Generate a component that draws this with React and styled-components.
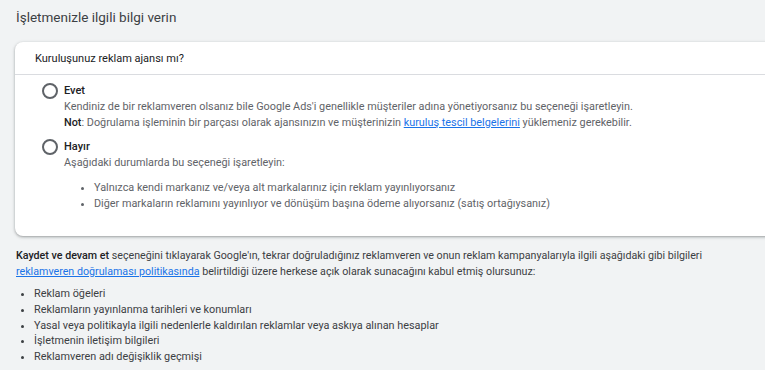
import styled, { createGlobalStyle } from "styled-components";

const GlobalStyle = createGlobalStyle`
  html, body {
    margin: 0;
    padding: 0;
    background: #f1f3f4;
    overflow: hidden;
  }
  body {
    font-family: Roboto, "Liberation Sans", Arial, sans-serif;
    -webkit-font-smoothing: antialiased;
  }
`;

const disclosed = [
  "Reklam öğeleri",
  "Reklamların yayınlanma tarihleri ve konumları",
  "Yasal veya politikayla ilgili nedenlerle kaldırılan reklamlar veya askıya alınan hesaplar",
  "İşletmenin iletişim bilgileri",
  "Reklamveren adı değişiklik geçmişi",
];

function App() {
  return (
    <Page>
      <GlobalStyle />
      <Title>İşletmenizle ilgili bilgi verin</Title>

      <Card>
        <CardHeader>Kuruluşunuz reklam ajansı mı?</CardHeader>
        <CardBody>
          <Option>
            <Radio aria-label="Evet" />
            <OptionText>
              <OptionLabel>Evet</OptionLabel>
              <Desc>
                Kendiniz de bir reklamveren olsanız bile Google Ads'i genellikle
                müşteriler adına yönetiyorsanız bu seçeneği işaretleyin.
              </Desc>
              <Desc>
                <strong>Not</strong>: Doğrulama işleminin bir parçası olarak
                ajansınızın ve müşterinizin{" "}
                <Link href="#">kuruluş tescil belgelerini</Link> yüklemeniz
                gerekebilir.
              </Desc>
            </OptionText>
          </Option>

          <Option>
            <Radio aria-label="Hayır" />
            <OptionText>
              <OptionLabel>Hayır</OptionLabel>
              <Desc>Aşağıdaki durumlarda bu seçeneği işaretleyin:</Desc>
              <CardList>
                <li>
                  Yalnızca kendi markanız ve/veya alt markalarınız için reklam
                  yayınlıyorsanız
                </li>
                <li>
                  Diğer markaların reklamını yayınlıyor ve dönüşüm başına ödeme
                  alıyorsanız (satış ortağıysanız)
                </li>
              </CardList>
            </OptionText>
          </Option>
        </CardBody>
      </Card>

      <Terms>
        <strong>Kaydet ve devam et</strong> seçeneğini tıklayarak Google'ın,
        tekrar doğruladığınız reklamveren ve onun reklam kampanyalarıyla ilgili
        aşağıdaki gibi bilgileri{" "}
        <Link href="#">reklamveren doğrulaması politikasında</Link> belirtildiği
        üzere herkese açık olarak sunacağını kabul etmiş olursunuz:
      </Terms>

      <TermsList>
        {disclosed.map((item) => (
          <li key={item}>{item}</li>
        ))}
      </TermsList>
    </Page>
  );
}

const Page = styled.div`
  padding: 7px 0 0 16px;
  width: 765px;
  box-sizing: border-box;
`;

const Title = styled.h1`
  margin: 0;
  font-size: 13.5px;
  line-height: 20px;
  font-weight: 400;
  color: #3c4043;
`;

const Card = styled.section`
  margin: 15px -10px 0 -1px;
  background: #fff;
  border-radius: 8px;
  box-shadow: 0 1px 2px rgba(60, 64, 67, 0.3),
    0 1px 3px 1px rgba(60, 64, 67, 0.15);
`;

const CardHeader = styled.div`
  height: 32px;
  display: flex;
  align-items: center;
  padding-left: 20px;
  font-size: 11px;
  color: #202124;
  border-bottom: 1px solid #dadce0;
`;

const CardBody = styled.div`
  padding: 8px 0 24px 27px;
  display: flex;
  flex-direction: column;
  gap: 8px;
`;

const Option = styled.div`
  display: flex;
  gap: 6px;
`;

const Radio = styled.span`
  flex: none;
  width: 12px;
  height: 12px;
  border: 2px solid #5f6368;
  border-radius: 50%;
`;

const OptionText = styled.div`
  display: flex;
  flex-direction: column;
`;

const OptionLabel = styled.div`
  font-size: 11px;
  line-height: 16px;
  font-weight: 500;
  color: #202124;
`;

const Desc = styled.div`
  font-size: 10.85px;
  line-height: 16px;
  color: #5f6368;
  white-space: nowrap;

  strong {
    font-weight: 500;
    color: #202124;
  }
`;

const Link = styled.a`
  color: #1a73e8;
  text-decoration: underline;
`;

const CardList = styled.ul`
  margin: 9px 0 0 0;
  padding-left: 30px;
  font-size: 10.85px;
  line-height: 16px;
  color: #5f6368;
`;

const Terms = styled.p`
  margin: 12px 0 0 0;
  max-width: 715px;
  font-size: 10.7px;
  line-height: 16px;
  color: #3c4043;

  strong {
    font-weight: 500;
    color: #202124;
  }
`;

const TermsList = styled.ul`
  margin: 6px 0 0 0;
  padding-left: 18px;
  font-size: 10.85px;
  line-height: 15.8px;
  color: #3c4043;
`;

export default App;
